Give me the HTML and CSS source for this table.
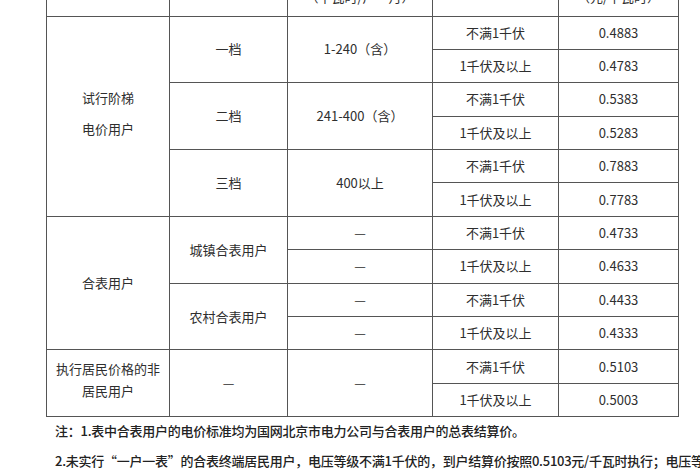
FILE: index.html
```html
<!DOCTYPE html>
<html lang="zh">
<head>
<meta charset="utf-8">
<link rel="stylesheet" href="styles.css">
</head>
<body>
<div class="page">
<table class="price">
<colgroup>
<col class="c1"><col class="c2"><col class="c3"><col class="c4"><col class="c5">
</colgroup>
<tr class="head">
<td class="hide">用户类别</td><td class="hide">分档</td><td>分档电量<br>（千瓦时/户·月）</td><td class="hide">电压等级</td><td>电价<br>（元/千瓦时）</td>
</tr>
<tr>
<td rowspan="6" class="two">试行阶梯<br>电价用户</td>
<td rowspan="2">一档</td><td rowspan="2">1-240（含）</td><td>不满1千伏</td><td>0.4883</td>
</tr>
<tr><td>1千伏及以上</td><td>0.4783</td></tr>
<tr><td rowspan="2">二档</td><td rowspan="2">241-400（含）</td><td>不满1千伏</td><td>0.5383</td></tr>
<tr><td>1千伏及以上</td><td>0.5283</td></tr>
<tr><td rowspan="2">三档</td><td rowspan="2">400以上</td><td>不满1千伏</td><td>0.7883</td></tr>
<tr><td>1千伏及以上</td><td>0.7783</td></tr>
<tr>
<td rowspan="4">合表用户</td>
<td rowspan="2">城镇合表用户</td><td>—</td><td>不满1千伏</td><td>0.4733</td>
</tr>
<tr><td>—</td><td>1千伏及以上</td><td>0.4633</td></tr>
<tr><td rowspan="2">农村合表用户</td><td>—</td><td>不满1千伏</td><td>0.4433</td></tr>
<tr><td>—</td><td>1千伏及以上</td><td>0.4333</td></tr>
<tr>
<td rowspan="2" class="tight">执行居民价格的非<br>居民用户</td>
<td rowspan="2">—</td><td rowspan="2">—</td><td>不满1千伏</td><td>0.5103</td>
</tr>
<tr><td>1千伏及以上</td><td>0.5003</td></tr>
</table>
<div class="notes">
<p>注：1.表中合表用户的电价标准均为国网北京市电力公司与合表用户的总表结算价。</p>
<p>2.未实行“一户一表”的合表终端居民用户，电压等级不满1千伏的，到户结算价按照0.5103元/千瓦时执行；电压等级1千伏及以上的，到户结算价按照0.4903元/千瓦时执行。</p>
</div>
</div>
</body>
</html>
```
FILE: styles.css
```css
html, body {
  margin: 0;
  padding: 0;
  background: #ffffff;
  overflow: hidden;
}
.page {
  width: 700px;
  height: 470px;
  overflow: hidden;
  font-family: "Noto Sans CJK SC", "Noto Sans", sans-serif;
  color: #2e2e2e;
}
.price {
  border-collapse: collapse;
  table-layout: fixed;
  margin-left: 46px;
  margin-top: -30.5px;
  width: 632px;
  font-size: 13px;
}
.c1 { width: 123px; }
.c2 { width: 118px; }
.c3 { width: 145px; }
.c4 { width: 126px; }
.c5 { width: 120px; }
.price td {
  border: 1.5px solid #555;
  text-align: center;
  vertical-align: middle;
  padding: 0 4px;
  height: 32.4px;
  line-height: 18px;
}
.price tr.head td {
  height: 36px;
  border-top: none;
  vertical-align: bottom;
  padding-bottom: 10px;
}
.price tr.head td.hide { vertical-align: top; }
.price td.two { line-height: 31px; padding-bottom: 6px; }
.price td.tight { line-height: 22px; padding-bottom: 6px; }
.notes {
  margin-top: -1px;
  padding-left: 55px;
  font-size: 13px;
  font-weight: 500;
  letter-spacing: -0.25px;
  color: #222;
  white-space: nowrap;
}
.notes p {
  margin: 0;
  line-height: 30px;
}
```
